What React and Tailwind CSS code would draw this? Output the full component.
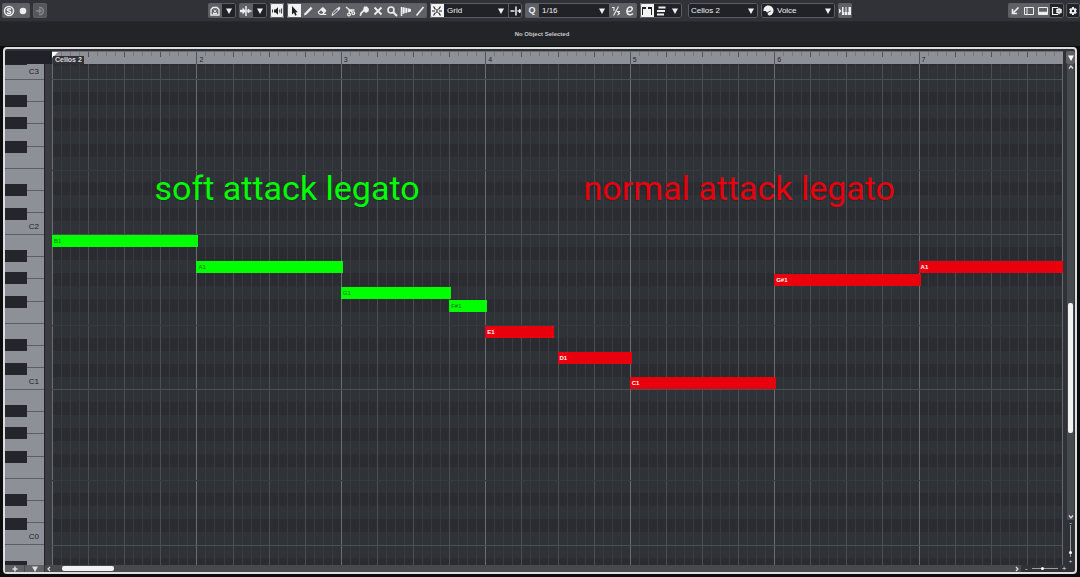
import React, { useState } from 'react';
import { FaEraser, FaScissors, FaGear } from 'react-icons/fa6';

const BARS = 7;
const OCTAVE = 155.2;
const ROW = OCTAVE / 12;
// distance from the top of the editor to the bottom edge of C3
const TOP = 15;

const octaves = [
  { name: 'C3', index: -1 },
  { name: 'C2', index: 0 },
  { name: 'C1', index: 1 },
  { name: 'C0', index: 2 },
  { name: '', index: 3 },
];

const whiteKeys = [22, 44, 67, 89, 111, 133, 155];
const blackKeys = [16, 38, 62, 105, 129];
const blackRows = [1, 3, 5, 8, 10];

// row counts semitones down from B2, start and length are in bars
const notes = [
  { name: 'B1', row: 12, start: 0, length: 1, type: 'soft' },
  { name: 'A1', row: 14, start: 1, length: 1, type: 'soft' },
  { name: 'G1', row: 16, start: 2, length: 0.75, type: 'soft' },
  { name: 'F#1', row: 17, start: 2.75, length: 0.25, type: 'soft' },
  { name: 'E1', row: 19, start: 3, length: 0.46, type: 'normal' },
  { name: 'D1', row: 21, start: 3.5, length: 0.5, type: 'normal' },
  { name: 'C1', row: 23, start: 4, length: 1, type: 'normal' },
  { name: 'G#1', row: 15, start: 5, length: 1, type: 'normal' },
  { name: 'A1', row: 14, start: 6, length: 1, type: 'normal' },
];

const captions = [
  { text: 'soft attack legato', start: 0.71, color: 'text-[#00ff00]' },
  { text: 'normal attack legato', start: 3.68, color: 'text-[#e8000d]' },
];

const rowTop = (row) => Math.round(TOP + row * ROW);
const percent = (bars) => `${(bars / BARS) * 100}%`;

const Icon = ({ children, className = 'size-3' }) => (
  <svg viewBox="0 0 12 12" className={className} fill="none" stroke="currentColor" strokeWidth="1.5">
    {children}
  </svg>
);

const Arrow = () => (
  <svg viewBox="0 0 6 6" className="size-[6px]" fill="currentColor">
    <path d="M0 0.5h6L3 6z" />
  </svg>
);

const Group = ({ children, className = '' }) => (
  <div
    className={`relative flex h-[15px] shrink-0 overflow-hidden rounded-xs after:pointer-events-none after:absolute after:inset-0 after:rounded-xs after:border after:border-[#5c5e63] ${className}`}
  >
    {children}
  </div>
);

const ToolButton = ({ label, children, className = 'bg-[#5f6166] text-[#eeeeee]' }) => (
  <button
    type="button"
    aria-label={label}
    className={`flex h-full w-[14px] shrink-0 items-center justify-center ${className}`}
  >
    {children}
  </button>
);

const dark = 'bg-[#202227] text-[#f0f0f0]';
const active = 'bg-[#f2f2f2] text-[#202227]';

const DropDown = ({ label, options, className }) => (
  <div className={`relative flex h-full items-center bg-[#202227] text-[#f0f0f0] ${className}`}>
    <select
      aria-label={label}
      className="h-full w-full appearance-none bg-transparent pl-[3px] text-[8px] leading-none outline-none"
    >
      {options.map((option) => (
        <option key={option}>{option}</option>
      ))}
    </select>
    <span className="pointer-events-none absolute right-[4px]">
      <Arrow />
    </span>
  </div>
);

const tools = [
  { label: 'Draw', icon: <Icon><path d="M2 10.5 2.6 8.2 8.8 1.8 10.5 3.4 4.2 9.8z" fill="currentColor" stroke="none" /></Icon> },
  { label: 'Erase', icon: <FaEraser size={10} /> },
  { label: 'Trim', icon: <Icon><path d="M2 10.5 3 7.5 7.5 3 9 4.5 4.5 9z" strokeWidth="1" /><path d="M7 4 9 1.5 10.5 3 8.5 5.5z" fill="currentColor" stroke="none" /></Icon> },
  { label: 'Split', icon: <Icon><path d="M2 2 8 7M5.500 5 10.500 5M5 4.500 5.500 8" strokeWidth="1.400" /><circle cx="9.300" cy="8.300" r="1.400" strokeWidth="1.200" /><circle cx="5" cy="9.500" r="1.400" strokeWidth="1.200" /></Icon> },
  { label: 'Glue', icon: <Icon><path d="M6 1.5 9 1.5 11 4 10.5 6.5 8 8 6 6.5 4 8.5 3 11 1.5 10.5 2.5 7.5 5 5z" fill="currentColor" stroke="none" /></Icon> },
  { label: 'Mute', icon: <Icon><path d="M2.5 2.5l7 7M9.5 2.5l-7 7" strokeWidth="1.8" /></Icon> },
  { label: 'Zoom', icon: <Icon><circle cx="5" cy="5" r="3" strokeWidth="1.6" /><path d="M7 7l4 4" strokeWidth="2" /></Icon> },
  { label: 'Time Warp', icon: <Icon><path d="M1.5 2v9" /><path d="M2.5 2 11 4v2.5L2.5 9z" fill="currentColor" stroke="none" /><path d="M5 2v7M7.5 3v5" stroke="#5f6166" strokeWidth="0.5" /></Icon> },
  { label: 'Line', icon: <Icon><path d="M2.5 10.5 9.5 2" strokeWidth="1.7" /></Icon> },
];

const Toolbar = () => (
  <header className="flex h-[22px] items-center border-b border-[#27292d] bg-[#303238] pl-[2px]">
    <div className="flex w-[206px] shrink-0 gap-[3px]">
      <Group>
        <ToolButton label="Solo Editor">
          <Icon>
            <circle cx="6" cy="6" r="4.5" />
            <path d="M8 4.5C7 3.3 4.2 3.5 4.3 4.9 4.4 6.3 7.8 5.6 7.8 7.2 7.8 8.7 5 8.8 4 7.5" />
          </Icon>
        </ToolButton>
        <ToolButton label="Record in Editor">
          <Icon><circle cx="6" cy="6" r="3.3" fill="currentColor" stroke="none" /></Icon>
        </ToolButton>
      </Group>
      <Group>
        <ToolButton label="Retrospective Record" className="bg-[#54565b] text-[#85878b]">
          <Icon><path d="M5 2.5A3.6 3.6 0 1 1 5 9.5M2 6h4.5M5 4l2 2-2 2" /></Icon>
        </ToolButton>
      </Group>
    </div>

    <div className="flex flex-1 gap-[3px]">
      <Group>
        <ToolButton label="Show Track Colors">
          <Icon><path d="M2 4.5 4 2.5h4l2 2V10H2z" strokeWidth="1.3" /><path d="M4 8.5h4M4.5 5l3 2.5M7.5 5l-3 2.5" strokeWidth="1" /></Icon>
        </ToolButton>
        <ToolButton label="Visibility menu" className={dark}><Arrow /></ToolButton>
      </Group>
      <Group>
        <ToolButton label="Auto-Scroll">
          <Icon><path d="M6 1v10" /><path d="M8.5 4v4M7 6h4.5" /><path d="M0 4.7h2.5V2.5L6 6 2.5 9.5V7.3H0z" fill="currentColor" stroke="none" /></Icon>
        </ToolButton>
        <ToolButton label="Auto-Scroll menu" className={dark}><Arrow /></ToolButton>
      </Group>
      <Group>
        <ToolButton label="Acoustic Feedback" className={active}>
          <Icon><path d="M3 4.5h1.5L7 2.2v7.6L4.5 7.5H3z" fill="currentColor" stroke="none" /><path d="M1.5 4.5v3M8.8 4.5v3M10.6 3.5v5" strokeWidth="0.9" /></Icon>
        </ToolButton>
      </Group>
      <Group>
        <ToolButton label="Object Selection" className={active}>
          <Icon><path d="M4 1v8.5l2-1.7 1.2 3 1.5-.7L7.5 7.3h2.3z" fill="currentColor" stroke="none" /></Icon>
        </ToolButton>
        {tools.map((tool) => (
          <ToolButton key={tool.label} label={tool.label}>{tool.icon}</ToolButton>
        ))}
      </Group>
      <Group>
        <ToolButton label="Snap" className={active}>
          <Icon><path d="M6 4v4M2.500 1.500 4.500 4.500M2.500 10.500 4.500 7.500M9.500 1.500 7.500 4.500M9.500 10.500 7.500 7.500M1 6h3M8 6h3" strokeWidth="1.200" /></Icon>
        </ToolButton>
        <DropDown label="Snap Type" options={['Grid', 'Events', 'Shuffle']} className="w-[64px]" />
        <ToolButton label="Grid Type" className={`border-l border-[#5c5e63] ${dark}`}>
          <Icon><path d="M6 1.5v9M0.5 6h4M7.5 6H12M9.7 4v4" /></Icon>
        </ToolButton>
      </Group>
      <Group>
        <ToolButton label="Apply Quantize"><span className="text-[9px] leading-none font-bold">Q</span></ToolButton>
        <DropDown label="Quantize Preset" options={['1/16', '1/8', '1/4']} className="w-[70px]" />
        <ToolButton label="Iterative Quantize">
          <Icon><path d="M8.5 1.5 3.5 10.5M2 2.5h2v3.5M10 6.5H7.5l2 2L7.5 10" strokeWidth="1.1" /></Icon>
        </ToolButton>
        <ToolButton label="Quantize Panel">
          <Icon><path d="M3 6.5C9 7 9.5 2 6.5 2 3.5 2 2.5 5 3 7.5 3.5 10 7 10.5 9 8.5" /></Icon>
        </ToolButton>
      </Group>
      <Group>
        <ToolButton label="Show Part Borders" className={active}>
          <Icon><path d="M1.5 10V3M10.5 10V3" strokeWidth="1" /><path d="M1 3h4M7 3h4" strokeWidth="2" /></Icon>
        </ToolButton>
        <ToolButton label="Edit Active Part" className={dark}>
          <Icon><path d="M3.5 2.500h7M2 6h8M2 9.500h7" strokeWidth="2" /></Icon>
        </ToolButton>
        <ToolButton label="Part menu" className={dark}><Arrow /></ToolButton>
      </Group>
      <Group className="ml-[3px]">
        <DropDown label="Active Part" options={['Cellos 2', 'Cellos 1']} className="w-[70px]" />
      </Group>
      <Group>
        <span className="flex w-[13px] items-center justify-end bg-[#202227] text-[#f0f0f0]">
          <Icon className="size-[11px]">
            <path d="M5.5 0.5c3.5 0 6 2.5 6 5.5S9.5 11.5 6.5 11.5L5 10l.5-2L4 8 3 6.5H0.5C0.5 3 2.5 .5 5.5 .5z" fill="currentColor" stroke="none" />
            <path d="M5.5 8 8.5 6.5" stroke="#202227" strokeWidth="0.9" />
          </Icon>
        </span>
        <DropDown label="Event Colors" options={['Voice', 'Velocity', 'Pitch']} className="w-[61px]" />
      </Group>
      <Group>
        <ToolButton label="Step Input">
          <Icon><path d="M0 3.5v5L2.5 6z" fill="currentColor" stroke="none" /><path d="M3 2h1.5v5h.7v3H3zM6.5 2h1v5h.7v3H5.8V7h.7zM9.5 2H12v8H8.8V7h.7z" fill="currentColor" stroke="none" /></Icon>
        </ToolButton>
      </Group>
    </div>

    <div className="flex shrink-0 gap-[2px]">
      <Group>
        <ToolButton label="Open in Separate Window">
          <Icon><path d="M9.5 2.5 4.5 7.5M3.5 4v4.5H8" strokeWidth="1.6" /></Icon>
        </ToolButton>
        <ToolButton label="Show Left Zone">
          <Icon><path d="M1.5 2.5h9v7h-9zM4 2.5v7" strokeWidth="1" /></Icon>
        </ToolButton>
        <ToolButton label="Show Lower Zone">
          <Icon><path d="M1.5 2.5h9v7h-9z" strokeWidth="1" /><path d="M1.5 8h9" strokeWidth="2.5" /></Icon>
        </ToolButton>
        <ToolButton label="Set up Window Layout" className={dark}>
          <Icon><path d="M7 2.5H1.5v7H7" strokeWidth="1.2" /><circle cx="8" cy="6" r="2" /><path d="M8 2.5v7M5 4.3l6 3.4M11 4.3 5 7.7" strokeWidth="0.7" /></Icon>
        </ToolButton>
      </Group>
      <Group>
        <ToolButton label="Set up Toolbar" className={dark}><FaGear size={8} /></ToolButton>
      </Group>
    </div>
  </header>
);

const Ruler = () => (
  <div className="relative h-[13px] flex-1 overflow-hidden border-t border-[#6c6e73] bg-[#8e9097]">
    {Array.from({ length: BARS * 16 + 1 }, (_, i) => (
      <span
        key={i}
        style={{ left: percent(i / 16) }}
        className={`absolute top-0 w-px bg-[#505257] ${i % 16 === 0 ? 'h-full' : i % 4 === 0 ? 'h-[5px]' : 'h-[4px] opacity-40'}`}
      />
    ))}
    {Array.from({ length: BARS - 1 }, (_, i) => (
      <span
        key={i}
        style={{ left: percent(i + 1) }}
        className="absolute top-[4px] pl-[3px] text-[7px] leading-[8px] text-[#202227]"
      >
        {i + 2}
      </span>
    ))}
    <svg viewBox="0 0 6 6" className="absolute top-0 left-0 size-[6px]" fill="#ffffff">
      <path d="M0 0h6L0 6z" />
    </svg>
    <span className="absolute top-[4px] left-px bg-[#303238] px-[2px] text-[7px] leading-[8px] font-bold text-[#dddddd]">
      Cellos 2
    </span>
  </div>
);

const Keyboard = () => (
  <div className="relative w-[39px] shrink-0 overflow-hidden bg-[#8e9097]">
    {octaves.map(({ name, index }) => (
      <div
        key={index}
        style={{ top: Math.round(TOP + index * OCTAVE) }}
        className="absolute left-0 h-[156px] w-full"
      >
        {whiteKeys.map((y) => (
          <span key={y} style={{ top: y }} className="absolute left-0 h-px w-full bg-[#5c5e63]" />
        ))}
        {blackKeys.map((y) => (
          <span key={y} style={{ top: y }} className="absolute left-0 h-[12px] w-[22px] bg-[#24262b]" />
        ))}
        {name && (
          <span className="absolute right-[5px] bottom-[3px] text-[8px] leading-[10px] text-[#202227]">{name}</span>
        )}
      </div>
    ))}
  </div>
);

const Note = ({ note }) => (
  <div
    style={{ top: rowTop(note.row), left: percent(note.start), width: `calc(${percent(note.length)} + 2px)` }}
    className={
      note.type === 'soft'
        ? 'absolute mt-px h-[12px] bg-[#00ff00] pl-[2px] text-[6px] leading-[12px] text-[#0b6b0b]'
        : 'absolute mt-px h-[12px] bg-[#e8000d] pl-[2px] text-[6px] leading-[12px] font-bold text-white'
    }
  >
    {note.name}
  </div>
);

const NoteDisplay = () => (
  <div className="relative flex-1 overflow-hidden bg-[#2f3338]">
    {/* black key rows */}
    {octaves.map(({ index }) =>
      blackRows.map((row) => (
        <span
          key={`${index}-${row}`}
          style={{ top: rowTop(index * 12 + row) }}
          className="absolute left-0 h-[13px] w-full bg-[#2b2c31]"
        />
      ))
    )}

    {/* time grid */}
    {Array.from({ length: BARS * 16 }, (_, i) => (
      <span
        key={i}
        style={{ left: percent(i / 16) }}
        className={`absolute top-0 h-full w-px ${i % 16 === 0 ? 'bg-[#6a6d71]' : i % 4 === 0 ? 'bg-[#4b4e52]' : 'bg-[#373a3f]'}`}
      />
    ))}
    {octaves.map(({ index }) => (
      <React.Fragment key={index}>
        <span style={{ top: rowTop(index * 12) }} className="absolute left-0 h-px w-full bg-[#4b4e52]" />
        <span style={{ top: rowTop(index * 12 + 7) }} className="absolute left-0 h-px w-full bg-[#373b40]" />
      </React.Fragment>
    ))}
    <span className="absolute top-0 right-0 h-full w-px bg-[#66696d]" />

    {notes.map((note) => (
      <Note key={`${note.name}-${note.start}`} note={note} />
    ))}

    {captions.map(({ text, start, color }) => (
      <p
        key={text}
        style={{ left: percent(start) }}
        className={`absolute top-[104px] font-['Roboto',sans-serif] text-[34px] leading-[40px] whitespace-nowrap text-shadow-xs ${color}`}
      >
        {text}
      </p>
    ))}
  </div>
);

const App = () => {
  const [zoomX, setZoomX] = useState(42);
  const [zoomY, setZoomY] = useState(90);

  return (
    <div className="flex min-h-screen flex-col bg-[#0c0c0e] font-['Liberation_Sans',sans-serif] text-[8px]">
      <Toolbar />

      {/* Info line */}
      <div className="flex h-[24px] items-center justify-center bg-[#232428] pl-[4px] text-[6px] leading-[8px] font-bold text-[#c8c8cc]">
        No Object Selected
      </div>

      <main className="mx-[3px] mt-px mb-[3px] flex flex-1 flex-col rounded-sm border-2 border-[#dddddd] bg-[#2f3338] pt-[2px]">
        <div className="flex">
          <div className="h-[13px] w-[47px] shrink-0 bg-[#202227]" />
          <Ruler />
          <button
            type="button"
            aria-label="Ruler menu"
            className="ml-[3px] flex h-[13px] w-[9px] items-center justify-center rounded-xs bg-[#5f6166] text-white"
          >
            <Arrow />
          </button>
        </div>

        <div className="flex flex-1">
          <Keyboard />
          <div className="w-[8px] shrink-0 border-l border-[#202227] bg-[#3a3c41]" />
          <NoteDisplay />
          <div className="ml-[3px] flex w-[9px] flex-col items-center text-[#dddddd]">
            <div className="flex w-[7px] flex-1 flex-col items-center bg-[#46494d]">
              <button type="button" aria-label="Scroll up">
                <Icon className="size-[6px]"><path d="M2 9l4-5 4 5" strokeWidth="2.5" /></Icon>
              </button>
              <div className="flex w-full flex-1 flex-col items-center">
                <div className="grow-[231]" />
                <div className="w-[5px] grow-[129] rounded-xs bg-[#f2f2f2]" />
                <div className="grow-[80]" />
              </div>
              <button type="button" aria-label="Scroll down">
                <Icon className="size-[6px]"><path d="M2 3l4 5 4-5" strokeWidth="2.5" /></Icon>
              </button>
            </div>
            <span className="h-[5px] leading-[5px]">-</span>
            <input
              type="range"
              aria-label="Vertical zoom"
              value={zoomY}
              onChange={(e) => setZoomY(Number(e.target.value))}
              className="h-[32px] w-[3px] appearance-none bg-[linear-gradient(90deg,transparent_1px,#9a9ca0_1px,#9a9ca0_2px,transparent_2px)] [writing-mode:vertical-lr] [&::-webkit-slider-thumb]:size-[3px] [&::-webkit-slider-thumb]:appearance-none [&::-webkit-slider-thumb]:rounded-full [&::-webkit-slider-thumb]:bg-white"
            />
            <span className="h-[8px] text-[6px] leading-[8px]">+</span>
          </div>
        </div>

        <div className="flex h-[7px] items-center text-[#dddddd]">
          <div className="flex h-full w-[39px] bg-[#5f6166]">
            <button type="button" aria-label="Add lane" className="flex flex-1 items-center justify-center border-r border-[#46494d]">
              <Icon className="size-[6px]"><path d="M6 1v10M1 6h10" strokeWidth="3" /></Icon>
            </button>
            <button type="button" aria-label="Lane menu" className="flex flex-1 items-center justify-center">
              <Arrow />
            </button>
          </div>
          <div className="ml-px flex h-full flex-1 items-center bg-[#46494d] px-px">
            <button type="button" aria-label="Scroll left">
              <Icon className="size-[6px]"><path d="M8 2 4 6l4 4" strokeWidth="2.5" /></Icon>
            </button>
            <div className="flex flex-1 px-[10px]">
              <div className="h-[5px] w-[52px] rounded-xs bg-[#f2f2f2]" />
            </div>
            <button type="button" aria-label="Scroll right">
              <Icon className="size-[6px]"><path d="m4 2 4 4-4 4" strokeWidth="2.5" /></Icon>
            </button>
          </div>
          <div className="flex w-[54px] items-center gap-[4px] pl-[4px] leading-[7px]">
            <span>-</span>
            <input
              type="range"
              aria-label="Horizontal zoom"
              value={zoomX}
              onChange={(e) => setZoomX(Number(e.target.value))}
              className="h-[3px] w-[26px] appearance-none bg-[linear-gradient(transparent_1px,#9a9ca0_1px,#9a9ca0_2px,transparent_2px)] [&::-webkit-slider-thumb]:size-[3px] [&::-webkit-slider-thumb]:appearance-none [&::-webkit-slider-thumb]:rounded-full [&::-webkit-slider-thumb]:bg-white"
            />
            <span>+</span>
          </div>
        </div>
      </main>
    </div>
  );
};

export default App;
